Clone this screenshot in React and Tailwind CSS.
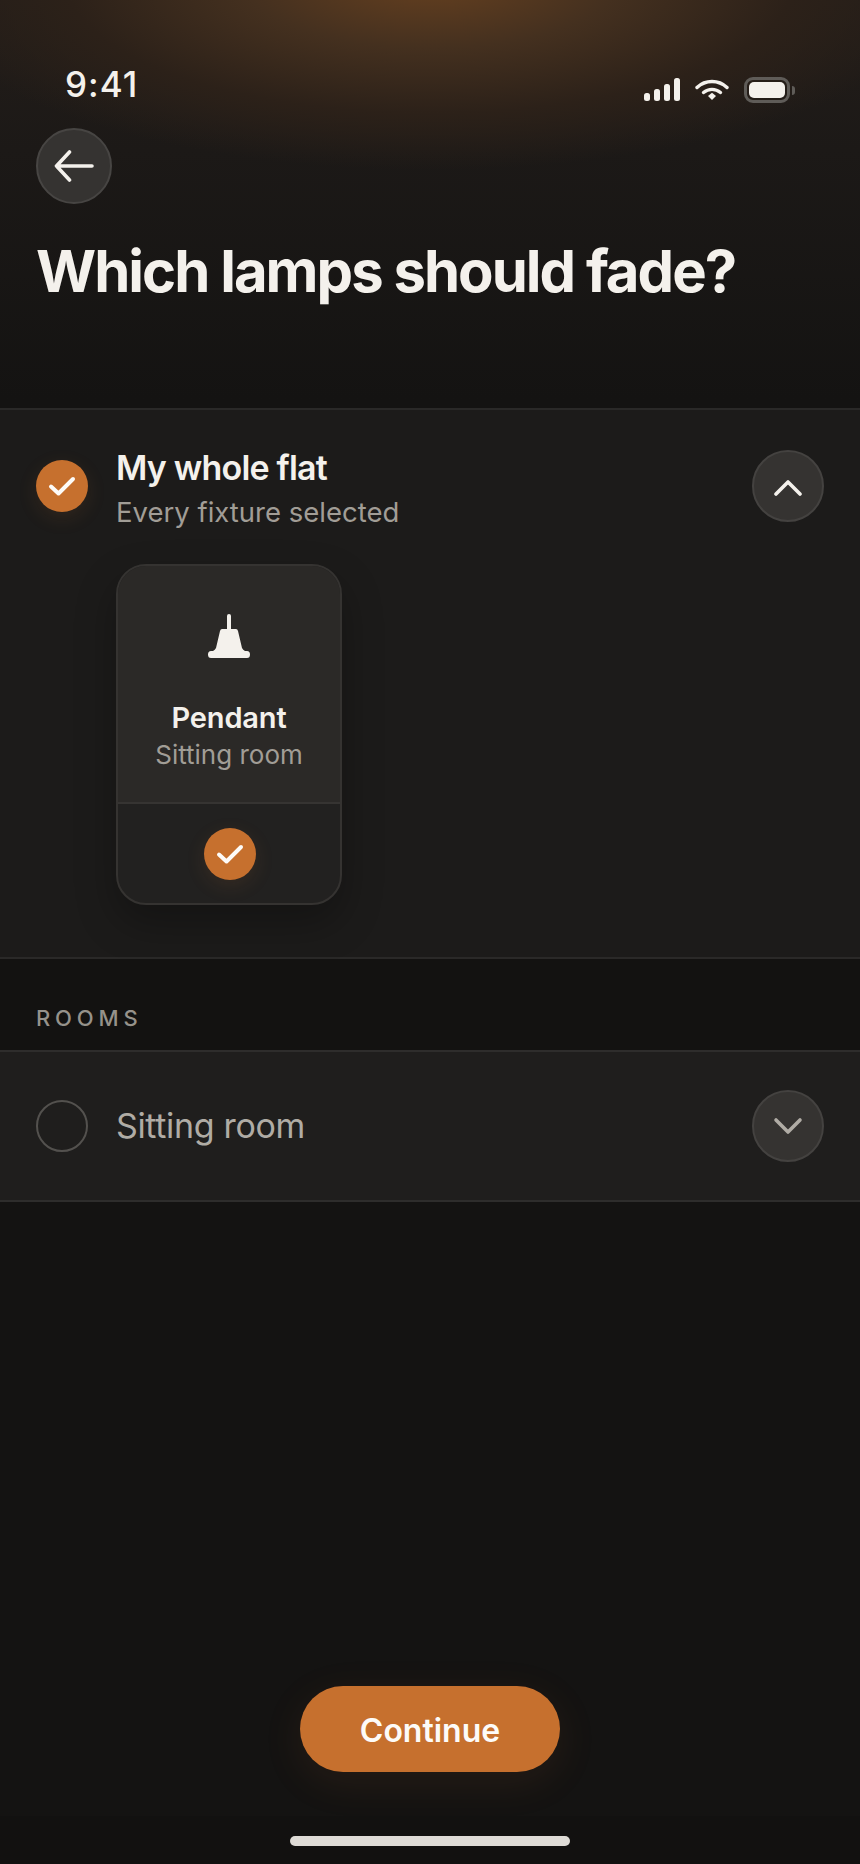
import React from 'react';

const font = { fontFamily: 'Inter, "Liberation Sans", sans-serif' };

const CheckDot = () => (
  <div className="w-[52px] h-[52px] shrink-0 rounded-full bg-[#c6702e] flex items-center justify-center shadow-[0_6px_20px_rgba(198,112,46,0.12)]">
    <svg width="30" height="24" viewBox="0 0 30 24" fill="none">
      <path d="M4 12.5 L11.5 19.5 L26 5" stroke="#fdfbf8" strokeWidth="4" strokeLinecap="round" strokeLinejoin="round" />
    </svg>
  </div>
);

const RoundToggle = ({ children }) => (
  <button className="w-[72px] h-[72px] shrink-0 rounded-full bg-[#353331] border-2 border-[#444240] flex items-center justify-center">
    {children}
  </button>
);

const Chevron = ({ d, color }) => (
  <svg width="30" height="20" viewBox="0 0 30 20" fill="none">
    <path d={d} stroke={color} strokeWidth="3.6" strokeLinecap="round" strokeLinejoin="round" />
  </svg>
);

const StatusIcons = () => (
  <div className="flex items-center gap-[15px] mt-[14px]">
    <svg width="36" height="24" viewBox="0 0 36 24" fill="#f4f1ec">
      <rect x="0" y="15" width="6" height="8" rx="2.5" />
      <rect x="10" y="11" width="6" height="12" rx="2.5" />
      <rect x="20" y="6" width="6" height="17" rx="2.5" />
      <rect x="30" y="0" width="6" height="23" rx="2.5" />
    </svg>
    <svg width="34" height="22" viewBox="0 0 34 22" fill="none">
      <path d="M2 8.5 C10.5 0.5 23.5 0.5 32 8.5" stroke="#f4f1ec" strokeWidth="3.4" strokeLinecap="round" />
      <path d="M8.5 13.5 C13.5 9.3 20.5 9.3 25.5 13.5" stroke="#f4f1ec" strokeWidth="3.4" strokeLinecap="round" />
      <path d="M13 17 L17 13.8 L21 17 L17 21 Z" fill="#f4f1ec" />
    </svg>
    <div className="flex items-center gap-[2px]">
      <div className="w-[46px] h-[26px] rounded-[9px] border-[3px] border-[#5f5c58] p-[2px]">
        <div className="w-full h-full rounded-[5px] bg-[#f4f1ec]" />
      </div>
      <div className="w-[3px] h-[9px] rounded-r-full bg-[#5f5c58]" />
    </div>
  </div>
);

const App = () => {
  return (
    <div
      style={font}
      className="relative w-[860px] h-[1864px] overflow-hidden flex flex-col bg-[#141312] bg-[radial-gradient(ellipse_520px_190px_at_50%_-20px,#66401f_0%,#44301f_36%,#2c2119_70%,rgba(36,30,26,0)_100%),linear-gradient(180deg,#231d19_0px,#1c1917_150px,#141312_400px)] bg-no-repeat"
    >
      {/* Status bar */}
      <div className="h-[128px] shrink-0 flex items-start justify-between pl-[65px] pr-[65px] pt-[63px]">
        <span className="text-[35px] leading-[42px] font-medium tracking-[0.03em] text-[#f4f1ec]">9:41</span>
        <StatusIcons />
      </div>

      {/* Header */}
      <div className="h-[280px] shrink-0 px-[36px]">
        <button className="w-[76px] h-[76px] rounded-full bg-[#353331] border-2 border-[#474543] flex items-center justify-center">
          <svg width="40" height="32" viewBox="0 0 40 32" fill="none">
            <path d="M38 16 H2.5 M15.5 2 L2.5 16 L15.5 30" stroke="#f4f1ec" strokeWidth="3.6" strokeLinecap="round" strokeLinejoin="round" />
          </svg>
        </button>
        <h1 className="mt-[32px] text-[58px] leading-[70px] font-bold tracking-[-0.034em] text-[#f4f1ec] whitespace-nowrap">
          Which lamps should fade?
        </h1>
      </div>

      {/* Whole flat */}
      <section className="h-[551px] shrink-0 bg-[#1c1b1a] border-y-2 border-[#2a2928] px-[36px] pt-[40px]">
        <div className="flex items-start">
          <div className="pt-[10px]">
            <CheckDot />
          </div>
          <div className="ml-[28px] flex-1 -mt-[3px]">
            <p className="text-[34px] leading-[42px] font-semibold tracking-[-0.024em] text-[#f4f1ec]">My whole flat</p>
            <p className="mt-[6px] text-[27.5px] leading-[34px] text-[#a19d96]">Every fixture selected</p>
          </div>
          <RoundToggle>
            <Chevron d="M3 18 L15 6 L27 18" color="#f4f1ec" />
          </RoundToggle>
        </div>

        <div className="ml-[80px] mt-[35px] w-[226px] h-[341px] rounded-[30px] border-2 border-[#353331] bg-[#222120] overflow-hidden flex flex-col shadow-[0_18px_40px_rgba(0,0,0,0.28)]">
          <div className="h-[238px] shrink-0 bg-[#2b2927] border-b-2 border-[#363432] flex flex-col items-center pt-[48px]">
            <svg width="42" height="44" viewBox="0 0 42 44" fill="#f4f1ec">
              <rect x="19" y="0" width="4" height="18" rx="2" />
              <path d="M14 15 H28 Q29.5 15 30 17 L34 34 Q35 36 37 37 H39 Q42 37 42 40.5 Q42 44 39 44 H3 Q0 44 0 40.5 Q0 37 3 37 H5 Q7 36 8 34 L12 17 Q12.5 15 14 15 Z" />
            </svg>
            <p className="mt-[43px] text-[29px] leading-[34px] font-semibold tracking-[-0.005em] text-[#f4f1ec]">Pendant</p>
            <p className="mt-[4px] text-[26px] leading-[32px] text-[#a19d96]">Sitting room</p>
          </div>
          <div className="flex-1 flex items-center justify-center pl-[1px]">
            <CheckDot />
          </div>
        </div>
      </section>

      {/* Rooms */}
      <div className="h-[91px] shrink-0 px-[36px] pt-[46px] bg-[#131211]">
        <p className="text-[22px] leading-[26px] font-medium tracking-[0.22em] text-[#96928b]">ROOMS</p>
      </div>

      <section className="h-[152px] shrink-0 bg-[#1f1e1d] border-y-2 border-[#2e2d2c] px-[36px] flex items-center">
        <div className="w-[52px] h-[52px] shrink-0 rounded-full border-2 border-[#53514e]" />
        <p className="ml-[28px] flex-1 text-[34px] leading-[42px] text-[#b0aca5] tracking-[-0.01em]">Sitting room</p>
        <RoundToggle>
          <Chevron d="M3 4 L15 16 L27 4" color="#b0aca5" />
        </RoundToggle>
      </section>

      {/* Footer */}
      <div className="flex-1 flex flex-col">
        <div className="flex-1 flex items-end justify-center pb-[44px] bg-[#141312]">
          <button className="w-[260px] h-[86px] pt-[3px] rounded-full bg-[#c6702e] text-[32px] font-semibold text-[#fdfbf8] shadow-[0_10px_40px_rgba(198,112,46,0.1)]">
            Continue
          </button>
        </div>
        <div className="h-[48px] shrink-0 bg-[#121110] flex justify-center pt-[20px]">
          <div className="w-[280px] h-[10px] rounded-full bg-[#dedbd6]" />
        </div>
      </div>
    </div>
  );
};

export default App;
